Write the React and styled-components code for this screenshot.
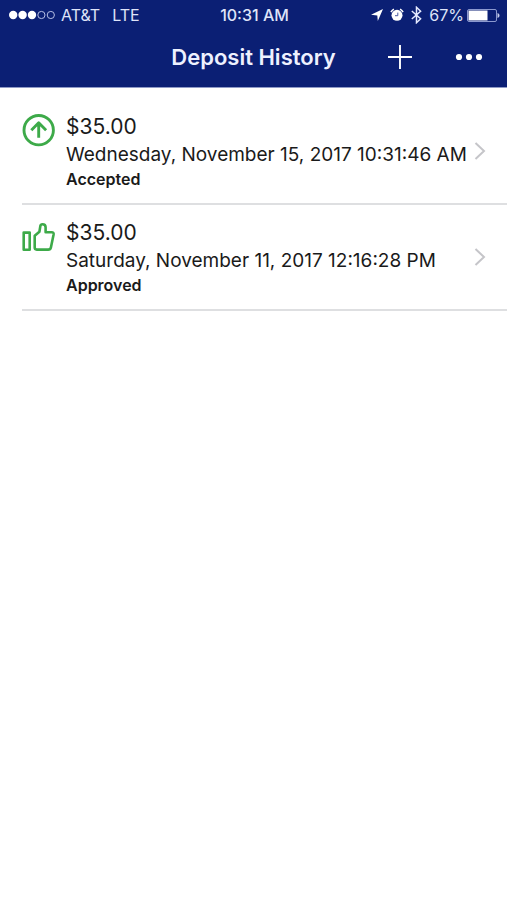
import React from "react";
import styled, { createGlobalStyle } from "styled-components";

const GlobalStyle = createGlobalStyle`
  *, *::before, *::after { box-sizing: border-box; }
  body {
    margin: 0;
    background: #fff;
    color: #1a1a1a;
    font-family: Inter, "Liberation Sans", sans-serif;
  }
`;

const Screen = styled.div`
  min-height: 100vh;
  background: #fff;
`;

const Header = styled.header`
  background: #0b1f74;
  color: #fff;
  border-bottom: 1px solid #8f9ac6;
`;

const StatusBar = styled.div`
  display: grid;
  grid-template-columns: 1fr auto 1fr;
  align-items: center;
  height: 30px;
  padding: 0 7px 0 9px;
  font-size: 16px;
  line-height: 20px;
  color: #dfe4f8;
`;

const StatusGroup = styled.div`
  display: flex;
  align-items: center;
  justify-content: ${({ $end }) => ($end ? "flex-end" : "flex-start")};
  gap: ${({ $gap }) => $gap}px;
  white-space: nowrap;
`;

const Clock = styled.time`
  font-weight: 500;
`;

const NavBar = styled.div`
  display: grid;
  grid-template-columns: 1fr auto 1fr;
  align-items: center;
  height: 57px;
  padding: 0 18px 4px;
`;

const Title = styled.h1`
  grid-column: 2;
  margin: 0;
  font-size: 22px;
  line-height: 28px;
  font-weight: 600;
  color: #eef1ff;
`;

const Actions = styled.div`
  display: flex;
  justify-content: flex-end;
  gap: 29px;
`;

const IconButton = styled.button`
  display: grid;
  place-items: center;
  width: 40px;
  height: 44px;
  margin: 0;
  padding: 0;
  border: 0;
  background: none;
  color: #fff;
  cursor: pointer;
`;

const List = styled.ul`
  margin: 0;
  padding: 11px 0 0 22px;
  list-style: none;
`;

const Item = styled.li`
  border-bottom: 2px solid #dedfe1;
`;

const ItemLink = styled.a`
  display: flex;
  align-items: center;
  height: 104px;
  padding-right: 21px;
  color: inherit;
  text-decoration: none;
`;

const IconSlot = styled.span`
  flex: none;
  align-self: flex-start;
  width: 44px;
  padding-top: 14px;
`;

const Details = styled.span`
  display: flex;
  flex: 1;
  flex-direction: column;
  min-width: 0;
`;

const Amount = styled.span`
  font-size: 21px;
  line-height: 28px;
`;

const DateLine = styled.span`
  font-size: 19px;
  line-height: 28px;
  white-space: nowrap;
`;

const Status = styled.span`
  font-size: 16px;
  line-height: 20px;
  font-weight: 600;
`;

const Glyph = styled.svg`
  display: block;
  flex: none;
`;

function SignalDots() {
  return (
    <Glyph width="48" height="10" viewBox="0 0 48 10" aria-label="Signal: 3 of 5" role="img">
      {[0, 1, 2, 3, 4].map((i) => (
        <circle
          key={i}
          cx={4.2 + i * 9.4}
          cy="5"
          r={i < 3 ? 4.2 : 3.6}
          fill={i < 3 ? "#fff" : "none"}
          stroke={i < 3 ? "none" : "#b5bee4"}
          strokeWidth="1"
        />
      ))}
    </Glyph>
  );
}

function LocationIcon() {
  return (
    <Glyph width="12" height="12" viewBox="0 0 12 12" aria-hidden="true">
      <path d="M12 0 L6.8 12 L6.3 6.5 L0 5.8 Z" fill="#fff" />
    </Glyph>
  );
}

function AlarmIcon() {
  return (
    <Glyph width="14" height="14" viewBox="0 0 14 14" aria-hidden="true">
      <circle cx="7" cy="7.3" r="5.5" fill="#fff" />
      <path d="M0.9 4.2 A7.2 7.2 0 0 1 3.9 1.2 M10.1 1.2 A7.2 7.2 0 0 1 13.1 4.2" fill="none" stroke="#fff" strokeWidth="1.5" />
      <path d="M7.8 4.6 V7.7 H5" fill="none" stroke="#4b5aa0" strokeWidth="1" />
    </Glyph>
  );
}

function BluetoothIcon() {
  return (
    <Glyph width="11" height="18" viewBox="0 0 11 18" aria-hidden="true">
      <path d="M0.8 5 L9.6 12.8 L5.5 16.7 V1.3 L9.6 5.2 L0.8 13" fill="none" stroke="#e6eaff" strokeWidth="1.5" />
    </Glyph>
  );
}

function BatteryIcon() {
  return (
    <Glyph width="33" height="13" viewBox="0 0 33 13" aria-hidden="true">
      <rect x="0.5" y="0.5" width="29" height="12" rx="1.5" fill="none" stroke="#8c99cf" />
      <rect x="1.5" y="1.5" width="19" height="10" fill="#fff" />
      <path d="M30.5 4 C33.2 5 33.2 8 30.5 9 Z" fill="#c5cceb" />
    </Glyph>
  );
}

function PlusIcon() {
  return (
    <Glyph width="24" height="24" viewBox="0 0 24 24" aria-hidden="true">
      <path d="M12 0 V24 M0 12 H24" stroke="#fff" strokeWidth="1.9" />
    </Glyph>
  );
}

function MoreIcon() {
  return (
    <Glyph width="28" height="8" viewBox="0 0 28 8" aria-hidden="true">
      <circle cx="4" cy="4" r="3.1" fill="#fff" />
      <circle cx="14" cy="4" r="3.1" fill="#fff" />
      <circle cx="24" cy="4" r="3.1" fill="#fff" />
    </Glyph>
  );
}

function AcceptedIcon() {
  return (
    <Glyph width="34" height="34" viewBox="0 0 34 34" aria-hidden="true">
      <g fill="none" stroke="#3daa49" strokeWidth="2.9">
        <circle cx="16.7" cy="17.2" r="14.7" />
        <path d="M16.7 24.7 V10.2 M9.3 17.2 L16.7 9.8 L24.1 17.2" strokeLinejoin="round" />
      </g>
    </Glyph>
  );
}

function ApprovedIcon() {
  return (
    <Glyph width="34" height="34" viewBox="0 0 34 34" aria-hidden="true">
      <g fill="none" stroke="#3daa49" strokeWidth="2.6" strokeLinejoin="round">
        <rect x="1.7" y="13.6" width="6" height="17.2" />
        <path d="M12.7 16.8 L17.4 12.8 L18.4 6.8 Q18.7 5.2 20.4 5.2 Q23.6 5.2 23.6 8.2 V13.2 H29.6 Q32 13.2 31.6 15.4 L28.9 28.4 Q28.4 30.6 26.2 30.6 H14.7 Q12.7 30.6 12.7 28.6 Z" />
      </g>
    </Glyph>
  );
}

function Chevron() {
  return (
    <Glyph width="12" height="18" viewBox="0 0 12 18" aria-hidden="true">
      <path d="M1.5 1 L10 9 L1.5 17" fill="none" stroke="#c5c5c9" strokeWidth="2" />
    </Glyph>
  );
}

const deposits = [
  {
    id: "accepted",
    amount: "$35.00",
    date: "Wednesday, November 15, 2017 10:31:46 AM",
    status: "Accepted",
    Icon: AcceptedIcon,
  },
  {
    id: "approved",
    amount: "$35.00",
    date: "Saturday, November 11, 2017 12:16:28 PM",
    status: "Approved",
    Icon: ApprovedIcon,
  },
];

export default function App() {
  return (
    <Screen>
      <GlobalStyle />
      <Header>
        <StatusBar>
          <StatusGroup $gap={12}>
            <StatusGroup $gap={4}>
              <SignalDots />
              <span>AT&amp;T</span>
            </StatusGroup>
            <span>LTE</span>
          </StatusGroup>
          <Clock>10:31 AM</Clock>
          <StatusGroup $gap={7} $end>
            <LocationIcon />
            <AlarmIcon />
            <BluetoothIcon />
            <StatusGroup $gap={3}>
              <span>67%</span>
              <BatteryIcon />
            </StatusGroup>
          </StatusGroup>
        </StatusBar>
        <NavBar>
          <Title>Deposit History</Title>
          <Actions>
            <IconButton type="button" aria-label="New deposit">
              <PlusIcon />
            </IconButton>
            <IconButton type="button" aria-label="More options">
              <MoreIcon />
            </IconButton>
          </Actions>
        </NavBar>
      </Header>
      <main>
        <List>
          {deposits.map(({ id, amount, date, status, Icon }) => (
            <Item key={id}>
              <ItemLink href={`#${id}`}>
                <IconSlot>
                  <Icon />
                </IconSlot>
                <Details>
                  <Amount>{amount}</Amount>
                  <DateLine>{date}</DateLine>
                  <Status>{status}</Status>
                </Details>
                <Chevron />
              </ItemLink>
            </Item>
          ))}
        </List>
      </main>
    </Screen>
  );
}
